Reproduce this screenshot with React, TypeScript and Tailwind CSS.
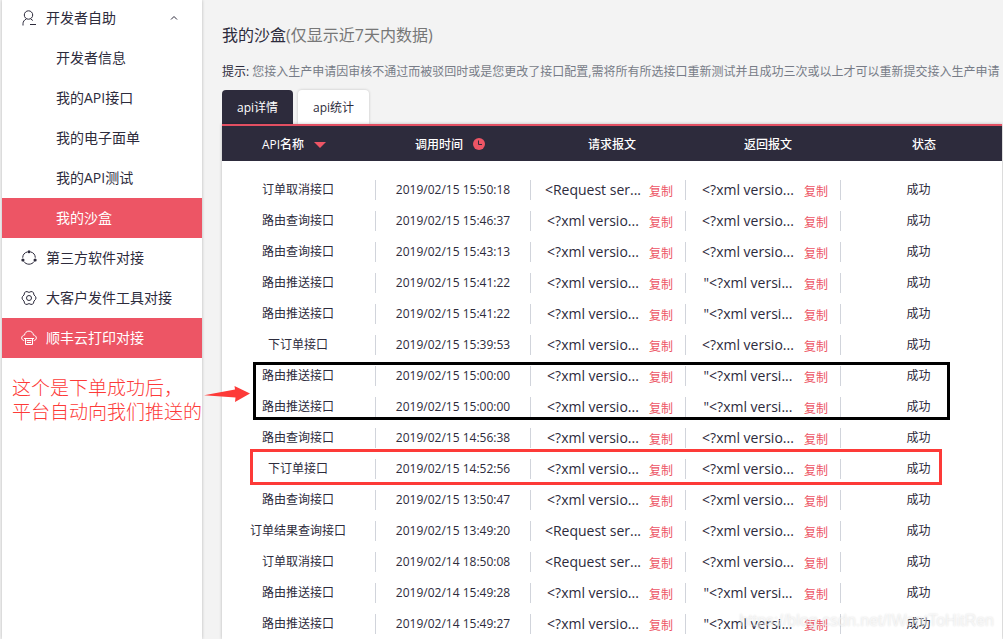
type Row = { name: string; time: string; request: string; response: string };

const XML = '<?xml versio...';
const QUOTED_XML = '"<?xml versi...';
const REQUEST = '<Request ser...';

const rows: Row[] = [
  { name: '订单取消接口', time: '2019/02/15 15:50:18', request: REQUEST, response: XML },
  { name: '路由查询接口', time: '2019/02/15 15:46:37', request: XML, response: XML },
  { name: '路由查询接口', time: '2019/02/15 15:43:13', request: XML, response: XML },
  { name: '路由推送接口', time: '2019/02/15 15:41:22', request: XML, response: QUOTED_XML },
  { name: '路由推送接口', time: '2019/02/15 15:41:22', request: XML, response: QUOTED_XML },
  { name: '下订单接口', time: '2019/02/15 15:39:53', request: XML, response: XML },
  { name: '路由推送接口', time: '2019/02/15 15:00:00', request: XML, response: QUOTED_XML },
  { name: '路由推送接口', time: '2019/02/15 15:00:00', request: XML, response: QUOTED_XML },
  { name: '路由查询接口', time: '2019/02/15 14:56:38', request: XML, response: XML },
  { name: '下订单接口', time: '2019/02/15 14:52:56', request: XML, response: XML },
  { name: '路由查询接口', time: '2019/02/15 13:50:47', request: XML, response: XML },
  { name: '订单结果查询接口', time: '2019/02/15 13:49:20', request: REQUEST, response: XML },
  { name: '订单取消接口', time: '2019/02/14 18:50:08', request: REQUEST, response: XML },
  { name: '路由推送接口', time: '2019/02/14 15:49:28', request: XML, response: QUOTED_XML },
  { name: '路由推送接口', time: '2019/02/14 15:49:27', request: XML, response: QUOTED_XML },
];

const subItems = ['开发者信息', '我的API接口', '我的电子面单', '我的API测试', '我的沙盒'];

function UserIcon() {
  return (
    <svg viewBox="0 0 16 16" className="h-4 w-4" fill="none" stroke="currentColor">
      <circle cx="7.500" cy="5" r="4.200" />
      <path d="M2 15.500v-1.800c0-2.200 1.300-3.700 3.300-4.700M9.800 9l2 1.500M9 14.500h6" />
    </svg>
  );
}

function RingIcon() {
  return (
    <svg viewBox="0 0 16 16" className="h-4 w-4" fill="none" stroke="currentColor">
      <path d="M9.6 1.9a6.3 6.3 0 0 1 4.7 5.8M13.3 11.4a6.4 6.4 0 0 1-10.6 0M1.7 7.7a6.3 6.3 0 0 1 4.7-5.8" />
      <g fill="currentColor" stroke="none">
        <circle cx="8" cy="1.7" r="1.5" />
        <circle cx="1.9" cy="10" r="1.6" />
        <circle cx="14.1" cy="10" r="1.6" />
      </g>
    </svg>
  );
}

function GearIcon() {
  return (
    <svg viewBox="0 0 16 16" className="h-4 w-4" fill="none" stroke="currentColor">
      <path
        d="M13 5Q17 8 13 11Q12.500 16.200 8 13.600Q3.500 16.200 3 11Q-1 8 3 5Q3.500-.2 8 2.400Q12.500-.2 13 5z"
        strokeLinejoin="round"
      />
      <circle cx="8" cy="8" r="2.500" />
    </svg>
  );
}

function PrintIcon() {
  return (
    <svg viewBox="0 0 16 16" className="h-4 w-4" fill="none" stroke="currentColor">
      <path d="M3.200 10.500C1.600 10.400.7 9.400.7 8c0-1.600 1.200-2.800 2.800-2.900C3.900 2.700 5.700 1.100 8 1.100s4.100 1.600 4.500 4c1.600.1 2.800 1.300 2.800 2.900 0 1.400-.9 2.400-2.500 2.500" />
      <path d="M3 8.500h10M4.500 8.500v6h7v-6M5.500 10.500h5M6 12.500h4" />
    </svg>
  );
}

function MenuLink({ icon, label, active }: { icon: React.ReactNode; label: string; active?: boolean }) {
  return (
    <a
      href="#"
      className={`flex h-10 items-center gap-[9px] pl-[19px] ${active ? 'bg-[#ed5565] text-white' : ''}`}
    >
      {icon}
      {label}
    </a>
  );
}

function Message({ text }: { text: string }) {
  return (
    <td className="flex h-5 items-center justify-center gap-1.5 border-r border-[#d1d4db]">
      <span className="w-[100px] text-center text-sm leading-5 whitespace-nowrap">{text}</span>
      <button type="button" className="pt-1 text-[#ed5565]">
        复制
      </button>
    </td>
  );
}

export default function App() {
  return (
    <div className="flex min-h-screen bg-[#f3f3f3] pl-0.5 font-['Open_Sans','Noto_Sans_CJK_SC',sans-serif] text-xs text-[#2d2b3c]">
      <aside className="relative z-10 w-[200px] shrink-0 bg-white text-sm shadow-[0_0_3px_rgba(0,0,0,0.25)]">
        <nav>
          <button type="button" className="flex h-[38px] w-full items-center gap-[9px] pr-6 pb-0.5 pl-[19px]">
            <UserIcon />
            开发者自助
            <svg viewBox="0 0 8 6" className="ml-auto h-1.5 w-2" fill="none" stroke="currentColor">
              <path d="M1 4.500 4 1.500l3 3" />
            </svg>
          </button>
          {subItems.map((item) => (
            <a
              key={item}
              href="#"
              className={`flex h-10 items-center pl-[54px] ${item === '我的沙盒' ? 'bg-[#ed5565] text-white' : ''}`}
            >
              {item}
            </a>
          ))}
          <MenuLink icon={<RingIcon />} label="第三方软件对接" />
          <MenuLink icon={<GearIcon />} label="大客户发件工具对接" />
          <MenuLink icon={<PrintIcon />} label="顺丰云打印对接" active />
        </nav>

        {/* Note with an arrow to the pushed rows */}
        <div className="relative pt-[18px] pl-2.5 text-[19px] leading-6 font-light whitespace-nowrap text-[#fd3a38]">
          <p>这个是下单成功后，</p>
          <p>平台自动向我们推送的</p>
          <svg viewBox="0 0 46 16" className="absolute top-7 left-[202px] h-4 w-[46px]" fill="currentColor">
            <path d="M0 9.200 31 3.500 30.500 0 46 7.500 31 16 31.500 11.500z" />
          </svg>
        </div>
      </aside>

      <main className="flex min-w-0 flex-1 flex-col pr-px pl-5">
        <h1 className="pt-[23px] text-base leading-6">
          我的沙盒<span className="text-[#777]">(仅显示近7天内数据)</span>
        </h1>
        <p className="pt-[15px] leading-5 whitespace-nowrap">
          提示: <span className="text-[#777c87]">您接入生产申请因审核不通过而被驳回时或是您更改了接口配置,需将所有所选接口重新测试并且成功三次或以上才可以重新提交接入生产申请</span>
        </p>

        <div className="flex gap-[5px] pt-2">
          <button type="button" className="h-[34px] rounded-t bg-[#2d2b3c] px-[15px] pt-0.5 text-white">
            api详情
          </button>
          <button type="button" className="h-[34px] rounded-t bg-white px-[15px] pt-0.5 shadow-[0_0_3px_rgba(0,0,0,0.2)]">
            api统计
          </button>
        </div>

        <div className="relative flex-1 bg-white shadow-[0_0_3px_rgba(0,0,0,0.25)]">
          <table className="block">
            <thead className="block border-t-2 border-[#e24f62] bg-[#2d2b3c] text-white">
              <tr className="grid h-[35px] grid-cols-5 items-center pt-0.5">
                <th className="flex items-center justify-center gap-2.5 pr-3 font-medium">
                  API名称
                  <svg viewBox="0 0 12 6" className="h-1.5 w-3 fill-[#ed5565]">
                    <path d="M0 0h12L6 6z" />
                  </svg>
                </th>
                <th className="flex items-center justify-center gap-2.5 pr-3 font-medium">
                  调用时间
                  <svg viewBox="0 0 12 12" className="mb-0.5 h-3 w-3">
                    <circle cx="6" cy="6" r="6" fill="#ed5565" />
                    <path d="M5.500 2.500v4h3.500" fill="none" stroke="#2d2b3c" />
                  </svg>
                </th>
                <th className="font-medium">请求报文</th>
                <th className="font-medium">返回报文</th>
                <th className="font-medium">状态</th>
              </tr>
            </thead>
            <tbody className="-ml-px grid gap-[11px] pt-[19px] pr-1.5 text-center">
              {rows.map((row, i) => (
                <tr key={i} className="grid grid-cols-5 leading-5">
                  <td className="border-r border-[#d1d4db]">{row.name}</td>
                  <td className="border-r border-[#d1d4db]">{row.time}</td>
                  <Message text={row.request} />
                  <Message text={row.response} />
                  <td>成功</td>
                </tr>
              ))}
            </tbody>
          </table>

          {/* Marks over the table rows */}
          <div className="pointer-events-none absolute top-[238px] right-[52px] left-[31px] h-[58px] border-3 border-black" />
          <div className="pointer-events-none absolute top-[325px] right-[60px] left-7 h-9 border-3 border-[#fd3a38]" />
          <span className="pointer-events-none absolute right-2 bottom-2 font-['Liberation_Sans',sans-serif] text-base leading-5 text-white/60 [text-shadow:0_0_2px_rgba(0,0,0,0.15)]">
            https://blog.csdn.net/IWantToHitRen
          </span>
        </div>
      </main>
    </div>
  );
}
